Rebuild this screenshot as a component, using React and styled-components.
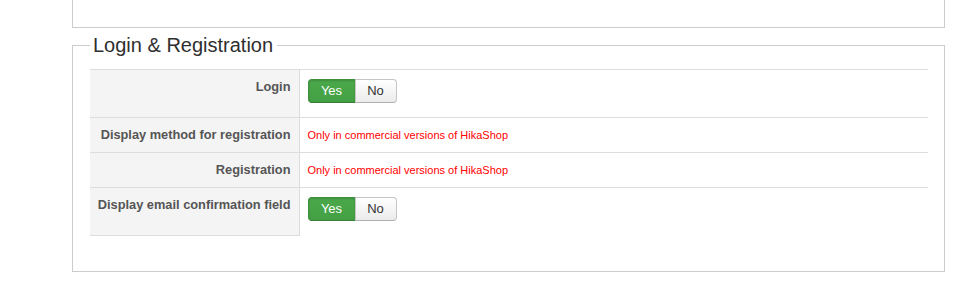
import React from "react";
import styled, { createGlobalStyle } from "styled-components";

const GlobalStyle = createGlobalStyle`
  html, body {
    margin: 0;
    padding: 0;
    background: #fff;
  }
  body {
    font-family: "Liberation Sans", Arial, Helvetica, sans-serif;
    color: #333;
  }
`;

const Page = styled.div`
  padding: 0 8px 0 72px;
  width: 953px;
  box-sizing: border-box;
`;

const PreviousPanel = styled.div`
  height: 28px;
  box-sizing: border-box;
  border: 1px solid #ccc;
  border-top: none;
`;

const Fieldset = styled.fieldset`
  margin: 5px 0 0;
  padding: 12px 16px 35px 17px;
  border: 1px solid #ccc;
  min-width: 0;
  box-sizing: border-box;
`;

const Legend = styled.legend`
  font-size: 20px;
  line-height: 24px;
  color: #2f2f2f;
  padding: 0 4px 0 3px;
  margin: 0;
`;

const Table = styled.table`
  width: 100%;
  table-layout: fixed;
  border-collapse: collapse;
  border-spacing: 0;
  font-size: 13px;
  line-height: 18px;

  tr:last-child th {
    border-bottom: 1px solid #ddd;
  }
`;

const LabelCol = styled.col`
  width: 209px;
`;

const Label = styled.th`
  background: #f4f4f4;
  border-top: 1px solid #ddd;
  border-right: 1px solid #ddd;
  padding: 8px 8px 8px 0;
  text-align: right;
  vertical-align: top;
  font-weight: bold;
  font-size: 12.8px;
  color: #555;
  white-space: nowrap;
`;

const Value = styled.td`
  border-top: 1px solid #ddd;
  padding: 8px 8px;
  vertical-align: top;
`;

const Notice = styled.span`
  font-size: 11px;
  color: #f00;
`;

const ButtonGroup = styled.div`
  display: inline-flex;
  margin: 1px 0 6px;
`;

const ToggleButton = styled.button`
  font-family: inherit;
  font-size: 13px;
  line-height: 18px;
  height: 24px;
  width: ${(p) => (p.$first ? "48px" : "42px")};
  padding: 2px 0;
  margin: 0;
  box-sizing: border-box;
  text-align: center;
  cursor: pointer;
  border: 1px solid ${(p) => (p.$active ? "#3e8f3e" : "#c5c5c5")};
  border-bottom-color: ${(p) => (p.$active ? "#377e37" : "#b0b0b0")};
  background: ${(p) =>
    p.$active ? "linear-gradient(#4aa84a, #44a044)" : "linear-gradient(#ffffff, #ebebeb)"};
  color: ${(p) => (p.$active ? "#fff" : "#333")};
  box-shadow: ${(p) =>
    p.$active ? "inset 0 1px 2px rgba(0,0,0,0.15)" : "inset 0 1px 0 rgba(255,255,255,0.4)"};
  border-radius: ${(p) => (p.$first ? "4px 0 0 4px" : "0 4px 4px 0")};
  ${(p) => (p.$first ? "" : "margin-left: -1px;")}
`;

function YesNo({ value }) {
  return (
    <ButtonGroup>
      <ToggleButton $first $active={value}>
        Yes
      </ToggleButton>
      <ToggleButton $active={!value}>No</ToggleButton>
    </ButtonGroup>
  );
}

const rows = [
  { label: "Login", toggle: true },
  { label: "Display method for registration", commercial: true },
  { label: "Registration", commercial: true },
  { label: "Display email confirmation field", toggle: true },
];

export default function App() {
  return (
    <Page>
      <GlobalStyle />
      <PreviousPanel />
      <Fieldset>
        <Legend>Login &amp; Registration</Legend>
        <Table>
          <colgroup>
            <LabelCol />
            <col />
          </colgroup>
          <tbody>
            {rows.map((row) => (
              <tr key={row.label}>
                <Label>{row.label}</Label>
                <Value>
                  {row.toggle ? (
                    <YesNo value={true} />
                  ) : (
                    <Notice>Only in commercial versions of HikaShop</Notice>
                  )}
                </Value>
              </tr>
            ))}
          </tbody>
        </Table>
      </Fieldset>
    </Page>
  );
}
